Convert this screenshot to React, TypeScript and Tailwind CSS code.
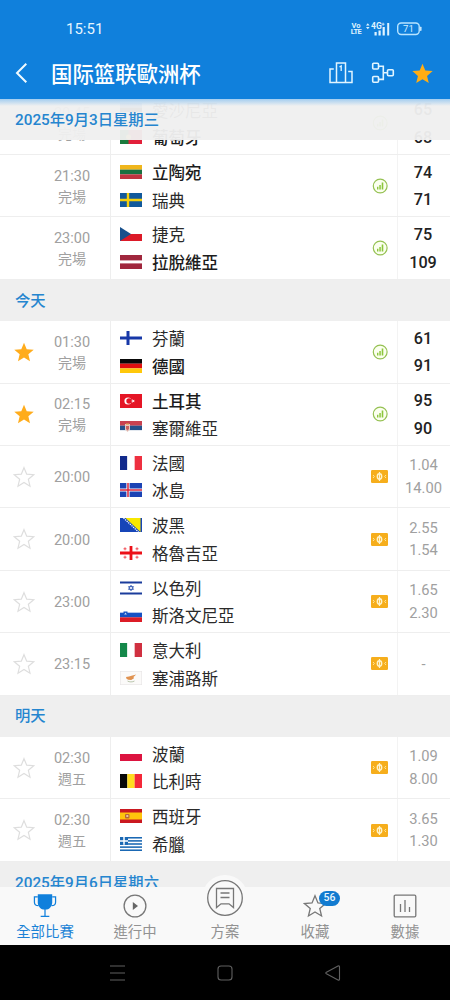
import React from "react";

type Team = { name: string; flag: string; bold?: boolean };
type Match = {
  time: string;
  note?: string;
  fav?: boolean;
  noStar?: boolean;
  home: Team;
  away: Team;
  kind: "stats" | "odds";
  values: string[];
};

const star = "M12 1.8l2.95 7.1 7.65.6-5.85 5 1.8 7.5L12 18l-6.55 4 1.8-7.5-5.85-5 7.65-.6z";

function Stripes({ colors, vertical }: { colors: string[]; vertical?: boolean }) {
  const n = colors.length;
  return (
    <>
      {colors.map((c, i) =>
        vertical ? (
          <rect key={i} x={(22 / n) * i} y="0" width={22 / n + 0.05} height="14" fill={c} />
        ) : (
          <rect key={i} x="0" y={(14 / n) * i} width="22" height={14 / n + 0.05} fill={c} />
        )
      )}
    </>
  );
}

function flagArt(code: string): React.ReactNode {
  switch (code) {
    case "ee":
      return <Stripes colors={["#1a72c8", "#111", "#fff"]} />;
    case "pt":
      return (
        <>
          <rect width="22" height="14" fill="#e2203a" />
          <rect width="8.5" height="14" fill="#1b7a3d" />
          <circle cx="8.5" cy="7" r="2.5" fill="#f0cf3c" />
        </>
      );
    case "lt":
      return <Stripes colors={["#f0b61c", "#1a7040", "#c03440"]} />;
    case "se":
      return (
        <>
          <rect width="22" height="14" fill="#11599c" />
          <path d="M0 7h22M8 0v14" stroke="#f5d00e" strokeWidth="2.4" />
        </>
      );
    case "cz":
      return (
        <>
          <rect width="22" height="7" fill="#fff" />
          <rect y="7" width="22" height="7" fill="#dc1a28" />
          <path d="M0 0l11 7-11 7z" fill="#18508c" />
        </>
      );
    case "lv":
      return (
        <>
          <rect width="22" height="14" fill="#a0273d" />
          <rect y="5.4" width="22" height="3" fill="#fff" />
        </>
      );
    case "fi":
      return (
        <>
          <rect width="22" height="14" fill="#fff" />
          <path d="M0 7h22M8 0v14" stroke="#1738a8" strokeWidth="3" />
        </>
      );
    case "de":
      return <Stripes colors={["#080808", "#df1010", "#ffc80a"]} />;
    case "tr":
      return (
        <>
          <rect width="22" height="14" fill="#e51525" />
          <circle cx="8" cy="7" r="3.6" fill="#fff" />
          <circle cx="9.1" cy="7" r="2.8" fill="#e51525" />
          <path d="M11 7l1.4-.5V5l1 1.2 1.4-.4-.9 1.2.9 1.2-1.4-.4-1 1.2V7.500z" fill="#fff" />
        </>
      );
    case "rs":
      return (
        <>
          <Stripes colors={["#c84250", "#24518b", "#fff"]} />
          <path d="M5 3h5v5.500L7.500 11 5 8.500z" fill="#e6c9c0" />
          <path d="M6 5h3v3L7.500 9.500 6 8z" fill="#c86060" />
          <path d="M6 2.500h3v1.200H6z" fill="#e0aa50" />
        </>
      );
    case "fr":
      return <Stripes vertical colors={["#122a8c", "#fff", "#ee3040"]} />;
    case "is":
      return (
        <>
          <rect width="22" height="14" fill="#1b43b4" />
          <path d="M0 7h22M8 0v14" stroke="#fff" strokeWidth="3.2" />
          <path d="M0 7h22M8 0v14" stroke="#d8263c" strokeWidth="1.5" />
        </>
      );
    case "ba":
      return (
        <>
          <rect width="22" height="14" fill="#1645b8" />
          <path d="M5.500 0H20.500v14z" fill="#f8e800" />
          <path d="M3.500 0L18.500 14" stroke="#fff" strokeWidth="1.3" strokeDasharray="1.3 .9" />
        </>
      );
    case "ge":
      return (
        <>
          <rect width="22" height="14" fill="#fff" />
          <path d="M0 7h22M11 0v14" stroke="#ec1018" strokeWidth="2.8" />
          <path d="M3.500 2.800h3M5 1.300v3M15.500 2.800h3M17 1.300v3M3.500 11.200h3M5 9.700v3M15.500 11.200h3M17 9.700v3" stroke="#f04048" strokeWidth=".9" />
        </>
      );
    case "il":
      return (
        <>
          <rect width="22" height="14" fill="#fff" />
          <path d="M0 1.600h22M0 12.400h22" stroke="#1b3c9c" strokeWidth="2" />
          <path d="M11 4.200l2.500 4.200h-5zM11 9.800L8.500 5.600h5z" fill="none" stroke="#2a50b0" strokeWidth=".8" />
        </>
      );
    case "si":
      return (
        <>
          <Stripes colors={["#fff", "#1652c4", "#dc1c26"]} />
          <path d="M3.500 3.500h4v3.200L5.500 8.800 3.500 6.700z" fill="#1652c4" />
          <path d="M4.200 6.600l1.300-2 1.300 2z" fill="#cfe0f8" />
        </>
      );
    case "it":
      return <Stripes vertical colors={["#14884a", "#fff", "#d03040"]} />;
    case "cy":
      return (
        <>
          <rect x=".3" y=".3" width="21.400" height="13.400" fill="#fbfaf9" stroke="#e6e4e4" strokeWidth=".6" />
          <path d="M6 6l3-.5 2.500-.8 4.700-1.200-2.700 2.400.5 1.400-2.800 1.700-3-.2-1.700-1z" fill="#e09250" />
          <path d="M7.500 10c1.800 1.200 5 1.200 7 0" stroke="#a8b898" strokeWidth=".8" fill="none" />
        </>
      );
    case "pl":
      return <Stripes colors={["#fff", "#dc1440"]} />;
    case "be":
      return <Stripes vertical colors={["#080808", "#ffdc20", "#f42838"]} />;
    case "es":
      return (
        <>
          <rect width="22" height="14" fill="#ca1820" />
          <rect y="3.500" width="22" height="7" fill="#ffc40c" />
          <rect x="5" y="5" width="4.500" height="4.500" rx="1" fill="#b8663a" />
          <rect x="6.300" y="6" width="2" height="2" fill="#e8c4a0" />
        </>
      );
    case "gr":
      return (
        <>
          <rect width="22" height="14" fill="#fff" />
          {[0, 2, 4, 6, 8].map((i) => (
            <rect key={i} y={(i * 14) / 9} width="22" height={14 / 9} fill="#1a68b4" />
          ))}
          <rect width="8" height="7.780" fill="#1a68b4" />
          <path d="M0 3.900h8M4 0v7.780" stroke="#fff" strokeWidth="1.500" />
        </>
      );
    default:
      return null;
  }
}

function Flag({ code }: { code: string }) {
  return (
    <svg viewBox="0 0 22 14" preserveAspectRatio="none" className="h-[14px] w-[22px] shrink-0">
      {flagArt(code)}
    </svg>
  );
}

function StatsIcon() {
  return (
    <svg viewBox="0 0 16 16" className="ml-[2px] size-4">
      <circle cx="8.200" cy="8" r="6.900" fill="#fbffef" stroke="#95c152" strokeWidth="1.200" />
      <path d="M5 8.800h1.400v2.800H5zM7.300 7h1.500v4.600H7.300zM9.700 4.600h1.600v7H9.700z" fill="#8cc63c" />
    </svg>
  );
}

function OddsIcon() {
  return (
    <svg viewBox="0 0 17 13" className="ml-px h-[13px] w-[17px]">
      <rect width="17" height="13" rx="1.200" fill="#f6ae1c" />
      <ellipse cx="8.500" cy="6.500" rx="2.200" ry="2.700" fill="none" stroke="#fff4cc" strokeWidth="1.400" />
      <path d="M8.500 2v9" stroke="#fff4cc" strokeWidth="1.200" />
      <path d="M2 5l1.300 1.500L2 8M15 5l-1.300 1.500L15 8" fill="none" stroke="#ffe8a0" strokeWidth="1" />
    </svg>
  );
}

function TeamLine({ team }: { team: Team }) {
  return (
    <div className="flex h-[27.5px] items-center gap-[10px]">
      <Flag code={team.flag} />
      <span
        className={
          team.bold
            ? "pt-[3px] text-[16.5px] leading-[27px] font-medium text-[#1c1c1c]"
            : "pt-[3px] text-[16.5px] leading-[27px] text-[#2a2a2a]"
        }
      >
        {team.name}
      </span>
    </div>
  );
}

function MatchRow({ m }: { m: Match }) {
  return (
    <div className="flex h-[62.4px] border-b border-[#eeeeee] bg-white">
      <div className="flex w-[111px] items-center border-r border-[#eeeeee]">
        <div className="flex w-12 justify-center">
          {!m.noStar && (
            <svg viewBox="0 0 24 24" className="size-[22px]">
              <path
                d={star}
                fill={m.fav ? "#ffac1c" : "none"}
                stroke={m.fav ? "none" : "#dedede"}
                strokeWidth="1.300"
              />
            </svg>
          )}
        </div>
        <div className="flex w-12 flex-col items-center pt-[2px] text-[14.500px] leading-[21px] text-[#a0a0a0]">
          <span>{m.time}</span>
          {m.note && <span className="text-[14px]">{m.note}</span>}
        </div>
      </div>
      <div className="flex flex-1 flex-col justify-center pl-[9px]">
        <TeamLine team={m.home} />
        <TeamLine team={m.away} />
      </div>
      <div className="flex w-[27px] items-center">{m.kind === "stats" ? <StatsIcon /> : <OddsIcon />}</div>
      {m.kind === "stats" ? (
        <div className="flex w-[53px] flex-col items-center justify-center border-l border-[#f3f3f3] pt-px pr-[2px] text-[16.200px] leading-[27.500px] font-medium text-[#222]">
          {m.values.map((v, i) => (
            <span key={i}>{v}</span>
          ))}
        </div>
      ) : (
        <div className="flex w-[53px] flex-col items-center justify-center border-l border-[#f3f3f3] pr-px text-[14.700px] leading-[22.300px] text-[#a0a0a0]">
          {m.values.map((v, i) => (
            <span key={i}>{v}</span>
          ))}
        </div>
      )}
    </div>
  );
}

function Section({ title }: { title: string }) {
  return (
    <div className="flex h-[41.4px] items-center bg-[#efefef] pt-px pl-[15px] text-[15.300px] font-medium text-[#2585cf]">
      {title}
    </div>
  );
}

const t = (name: string, flag: string, bold = false): Team => ({ name, flag, bold });

const yesterday: Match[] = [
  { time: "20:45", note: "完場", noStar: true, home: t("愛沙尼亞", "ee"), away: t("葡萄牙", "pt", true), kind: "stats", values: ["65", "68"] },
  { time: "21:30", note: "完場", noStar: true, home: t("立陶宛", "lt", true), away: t("瑞典", "se"), kind: "stats", values: ["74", "71"] },
  { time: "23:00", note: "完場", noStar: true, home: t("捷克", "cz"), away: t("拉脫維亞", "lv", true), kind: "stats", values: ["75", "109"] },
];

const today: Match[] = [
  { time: "01:30", note: "完場", fav: true, home: t("芬蘭", "fi"), away: t("德國", "de", true), kind: "stats", values: ["61", "91"] },
  { time: "02:15", note: "完場", fav: true, home: t("土耳其", "tr", true), away: t("塞爾維亞", "rs"), kind: "stats", values: ["95", "90"] },
  { time: "20:00", home: t("法國", "fr"), away: t("冰島", "is"), kind: "odds", values: ["1.04", "14.00"] },
  { time: "20:00", home: t("波黑", "ba"), away: t("格魯吉亞", "ge"), kind: "odds", values: ["2.55", "1.54"] },
  { time: "23:00", home: t("以色列", "il"), away: t("斯洛文尼亞", "si"), kind: "odds", values: ["1.65", "2.30"] },
  { time: "23:15", home: t("意大利", "it"), away: t("塞浦路斯", "cy"), kind: "odds", values: ["-"] },
];

const tomorrow: Match[] = [
  { time: "02:30", note: "週五", home: t("波蘭", "pl"), away: t("比利時", "be"), kind: "odds", values: ["1.09", "8.00"] },
  { time: "02:30", note: "週五", home: t("西班牙", "es"), away: t("希臘", "gr"), kind: "odds", values: ["3.65", "1.30"] },
];

function Header() {
  return (
    <header className="h-[99px] bg-[#1080dc] text-white">
      <div className="flex h-[48px] items-center justify-between pt-[10px] pr-[28px] pl-[66px]">
        <span className="text-[15px] text-[#e6f6ff]">15:51</span>
        <div className="flex items-center text-[#dff3ff]">
          <div className="flex w-[10px] flex-col items-center text-[7.500px] leading-[6.5px] font-bold">
            <span>Vo</span>
            <span className="tracking-[-0.5px]">LTE</span>
          </div>
          <svg viewBox="0 0 24 14" className="ml-[5px] h-[14px] w-6" fill="currentColor">
            <path d="M0 3.500L1.800 1.200 3.600 3.500zM0 5L1.800 7.300 3.600 5z" />
            <path d="M8.500 10h2.200v3.500H8.500zM12.500 8.500h2.200v5h-2.200zM16.600 5h2.200v8.500h-2.200zM21.200 1h2v12.500h-2z" />
            <text x="5" y="7" fontSize="8.500" fontFamily="Roboto" fontWeight="700">4G</text>
            <path d="M15.600 2.200h3M17.100.7v3" stroke="currentColor" strokeWidth=".8" />
          </svg>
          <svg viewBox="0 0 25 14" className="ml-[7px] h-[14px] w-[25px]">
            <rect x=".7" y="1" width="21.500" height="11.500" rx="3.500" fill="none" stroke="#b8e4ff" strokeWidth="1.400" />
            <path d="M23.200 5h1v3.500h-1z" fill="#d5efff" stroke="#d5efff" strokeWidth=".6" />
            <text x="11.400" y="10.200" fontSize="9.500" fontFamily="Roboto" textAnchor="middle" fill="#d5efff">71</text>
          </svg>
        </div>
      </div>
      <div className="flex h-[50px] items-center pl-[15px]">
        <svg viewBox="0 0 14 22" className="h-[22px] w-[14px]" fill="none" stroke="#f0faff" strokeWidth="2">
          <path d="M11.300 1.800L2 11l9.300 9.300" />
        </svg>
        <h1 className="ml-[22px] text-[21.400px] leading-[30px] font-medium [font-family:'Noto_Sans_CJK_SC',sans-serif]">
          国际篮联歐洲杯
        </h1>
        <svg viewBox="0 0 24 22" className="ml-[128px] h-[22px] w-6" fill="none" stroke="#e2f5ff" strokeWidth="1.500">
          <path d="M7.500 20.500V1h9v19.500zM4.800 7H1v13.500h22V9.500h-3.800" />
          <path d="M10.500 5l1.700-1v5" strokeWidth="1.300" />
        </svg>
        <svg viewBox="0 0 24 22" className="ml-[18px] h-[22px] w-6" fill="none" stroke="#e2f5ff" strokeWidth="1.600">
          <rect x="1.700" y="1.200" width="5.800" height="5.800" rx="1" />
          <rect x="1.700" y="14.500" width="5.800" height="5.800" rx="1" />
          <rect x="16.500" y="7.800" width="5.800" height="6" rx="1" />
          <path d="M7.500 4.200h4.800v13.200H7.500M12.300 10.800h4.200" />
        </svg>
        <svg viewBox="0 0 24 24" className="ml-[16px] size-[23px]">
          <path d={star} fill="#ffad14" />
        </svg>
      </div>
    </header>
  );
}

function Tab({ label, active, children }: { label: string; active?: boolean; children: React.ReactNode }) {
  return (
    <div className={active ? "flex flex-col items-center text-[#1a82d6]" : "flex flex-col items-center text-[#929292]"}>
      <div className="flex h-[34px] items-center justify-center pt-[3px]">{children}</div>
      <span className="pt-px text-[14.400px] leading-[22px]">{label}</span>
    </div>
  );
}

function TabBar() {
  return (
    <nav className="relative grid h-[58px] grid-cols-5 bg-[#f9f9f9]">
      <Tab label="全部比賽" active>
        <svg viewBox="0 0 24 26" className="h-[25px] w-6">
          <path d="M4.500 1.200h15v8.300c0 4-2.600 6.700-5.500 7.700h-4c-2.900-1-5.500-3.700-5.500-7.700z" fill="#1080dc" />
          <path d="M4.500 4H1v5.500c0 2.500 1.700 3.600 4.300 3.600M19.500 4H23v5.500c0 2.500-1.700 3.600-4.300 3.600M12 16v8M7.500 24.200h9" fill="none" stroke="#1080dc" strokeWidth="1.300" />
        </svg>
      </Tab>
      <Tab label="進行中">
        <svg viewBox="0 0 24 24" className="size-6">
          <circle cx="12" cy="12" r="10.900" fill="none" stroke="#777" strokeWidth="1.300" />
          <path d="M9.800 8l5.200 4-5.200 4z" fill="#666" />
        </svg>
      </Tab>
      <Tab label="方案">
        <div className="relative -top-[8px] flex size-[46px] shrink-0 items-center justify-center rounded-full bg-[#f9f9f9]">
          <svg viewBox="0 0 38 38" className="size-[38px]" fill="none" stroke="#777" strokeWidth="1.300">
            <circle cx="19" cy="19" r="17.300" />
            <path d="M10.500 9.500h17v19l-4.500-3.700h-8l-4.500 3.700z" />
            <path d="M14.500 14h9M14.500 18.500h9" />
          </svg>
        </div>
      </Tab>
      <Tab label="收藏">
        <div className="relative">
          <svg viewBox="0 0 24 24" className="size-6">
            <path d={star} fill="none" stroke="#777" strokeWidth="1.300" />
          </svg>
          <span className="absolute -top-[3px] left-[16px] flex h-[15px] w-[21px] items-center justify-center rounded-full bg-[#127bd0] text-[10.500px] leading-none font-medium text-[#e8f6ff]">
            56
          </span>
        </div>
      </Tab>
      <Tab label="數據">
        <svg viewBox="0 0 24 24" className="size-6" fill="none" stroke="#777" strokeWidth="1.300">
          <rect x="1.200" y="1.200" width="21.600" height="21.600" rx="1.200" />
          <path d="M7.500 10v8M12 6v12M16.500 13v5" />
        </svg>
      </Tab>
    </nav>
  );
}

function SystemNav() {
  return (
    <div className="flex h-[55px] items-center bg-black pl-[109px]">
      <svg viewBox="0 0 18 18" className="size-[18px]" stroke="#606060" strokeWidth="1.100">
        <path d="M1 2h15M1 9h15M1 16h15" />
      </svg>
      <svg viewBox="0 0 18 18" className="ml-[89px] size-[18px]" fill="none" stroke="#606060" strokeWidth="1.100">
        <rect x="2" y="2" width="14" height="14" rx="3" />
      </svg>
      <svg viewBox="0 0 18 18" className="ml-[90px] size-[18px]" fill="none" stroke="#606060" strokeWidth="1.100">
        <path d="M2.400 8.300L14 2q1.500-.6 1.500 1v12q0 1.600-1.500 1L2.400 9.700q-1.200-.7 0-1.400z" />
      </svg>
    </div>
  );
}

export default function App() {
  return (
    <div
      lang="zh-Hant"
      className="h-[1000px] w-[450px] overflow-hidden bg-white [font-family:Roboto,'Noto_Sans_CJK_TC',sans-serif]"
    >
      <Header />
      <main className="relative h-[788px] overflow-hidden bg-white">
        <div className="-mt-[6.300px]">
          {yesterday.map((m, i) => (
            <MatchRow key={i} m={m} />
          ))}
          <Section title="今天" />
          {today.map((m, i) => (
            <MatchRow key={i} m={m} />
          ))}
          <Section title="明天" />
          {tomorrow.map((m, i) => (
            <MatchRow key={i} m={m} />
          ))}
          <Section title="2025年9月6日星期六" />
        </div>
        <div className="absolute inset-x-0 top-0 flex h-[41px] items-center bg-[#efefef]/96 pt-px pl-[15px] text-[15.300px] font-medium text-[#2585cf]">
          2025年9月3日星期三
        </div>
        <div className="absolute inset-x-0 top-0 h-[7px] bg-linear-to-b from-[#a3cdf0] to-[#efefef]/0" />
      </main>
      <TabBar />
      <SystemNav />
    </div>
  );
}
